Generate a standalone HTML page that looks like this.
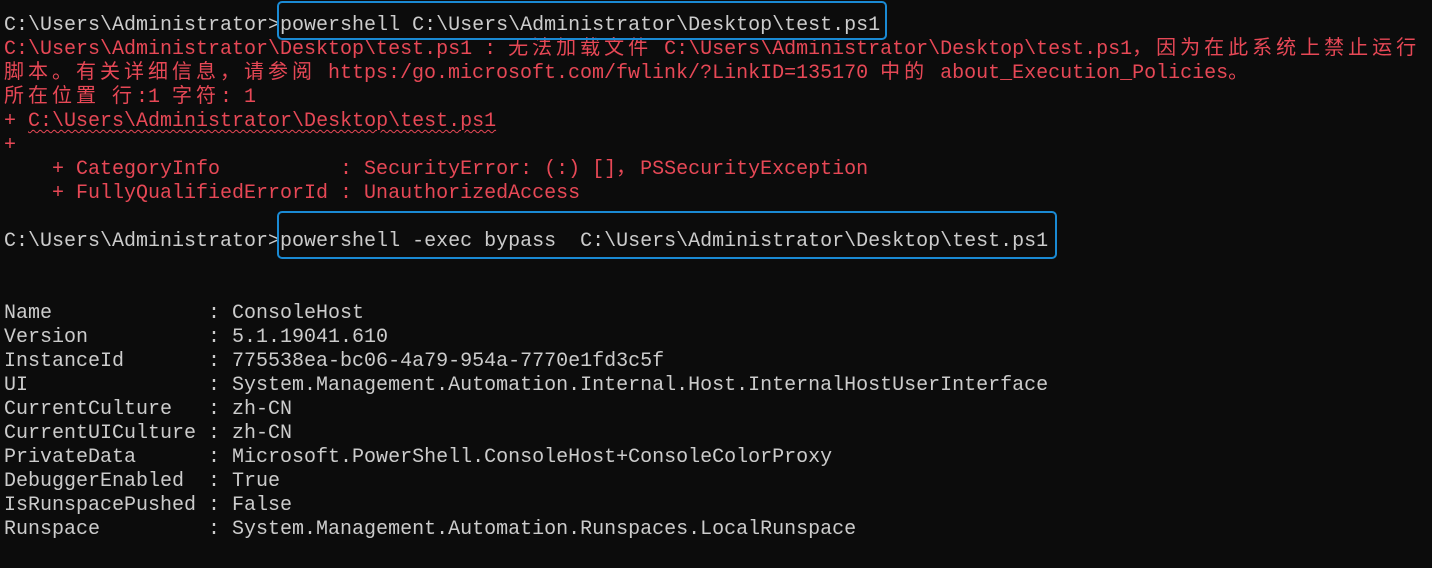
<!DOCTYPE html>
<html><head><meta charset="utf-8"><style>
html,body{margin:0;padding:0;background:#0c0c0c;width:1432px;height:568px;overflow:hidden}
.t{position:absolute;left:4px;top:14px;font-family:"Liberation Mono","Noto Sans CJK SC",monospace;font-size:20px;color:#cccccc}
.t div{height:24px;line-height:24px;white-space:pre}
.r{color:#e74856}
.c{letter-spacing:4px;font-family:"Noto Sans CJK SC",sans-serif;font-size:20px;line-height:0}
.w{text-decoration:underline wavy #e74856;text-decoration-thickness:1px;text-underline-offset:3px}
.box{position:absolute;border:2px solid #1a8ad4;border-radius:5px}
</style></head><body>
<div class="t">
<div>C:\Users\Administrator&gt;powershell C:\Users\Administrator\Desktop\test.ps1</div>
<div class="r">C:\Users\Administrator\Desktop\test.ps1 : <span class="c">无法加载文件</span> C:\Users\Administrator\Desktop\test.ps1<span class="c">，因为在此系统上禁止运行</span></div>
<div class="r"><span class="c">脚本。有关详细信息，请参阅</span> https:/go.microsoft.com/fwlink/?LinkID=135170 <span class="c">中的</span> about_Execution_Policies<span class="c">。</span></div>
<div class="r"><span class="c">所在位置</span> <span class="c">行</span>:1 <span class="c">字符</span>: 1</div>
<div class="r">+ <span class="w">C:\Users\Administrator\Desktop\test.ps1</span></div>
<div class="r">+</div>
<div class="r">    + CategoryInfo          : SecurityError: (:) []<span class="c">，</span>PSSecurityException</div>
<div class="r">    + FullyQualifiedErrorId : UnauthorizedAccess</div>
<div> </div>
<div>C:\Users\Administrator&gt;powershell -exec bypass  C:\Users\Administrator\Desktop\test.ps1</div>
<div> </div>
<div> </div>
<div>Name             : ConsoleHost</div>
<div>Version          : 5.1.19041.610</div>
<div>InstanceId       : 775538ea-bc06-4a79-954a-7770e1fd3c5f</div>
<div>UI               : System.Management.Automation.Internal.Host.InternalHostUserInterface</div>
<div>CurrentCulture   : zh-CN</div>
<div>CurrentUICulture : zh-CN</div>
<div>PrivateData      : Microsoft.PowerShell.ConsoleHost+ConsoleColorProxy</div>
<div>DebuggerEnabled  : True</div>
<div>IsRunspacePushed : False</div>
<div>Runspace         : System.Management.Automation.Runspaces.LocalRunspace</div>
</div>
<div class="box" style="left:277px;top:1px;width:606px;height:35px"></div>
<div class="box" style="left:277px;top:211px;width:776px;height:44px"></div>
</body></html>
